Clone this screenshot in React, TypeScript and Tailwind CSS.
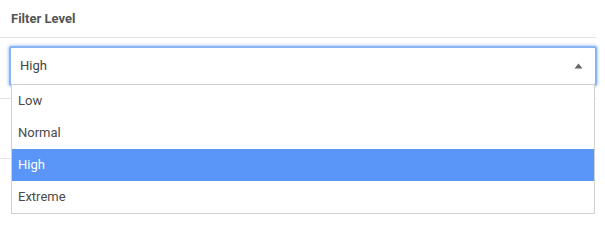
import { useState } from 'react';

const levels = ['Low', 'Normal', 'High', 'Extreme'];

export default function App() {
  const [selected] = useState('High');

  return (
    <div className="relative w-[605px] h-[221px] overflow-hidden bg-white font-['Roboto',sans-serif] text-[13px] text-[#444]">
      {/* header */}
      <div className="w-[596px] h-[38px] flex items-center px-[11px] border-b border-[#e3e3e3]">
        <span className="font-bold text-[#555]">Filter Level</span>
      </div>

      {/* field row */}
      <div className="w-[596px] h-[61px] border-b border-[#e3e3e3] pt-[8px] pl-[9px]">
        <div className="relative w-[588px] h-[40px] rounded-[3px] border-2 border-[#88b4f1] shadow-[0_0_3px_1px_#b3cff6] bg-white flex items-center justify-between pl-[9px] pr-[12px]">
          <span>{selected}</span>
          <svg width="9" height="6" viewBox="0 0 9 6" className="text-[#666]">
            <path d="M4.5 0.5 L8.5 5.5 L0.5 5.5 Z" fill="currentColor" />
          </svg>
        </div>
      </div>
      <div className="w-[596px] h-[60px] border-b border-[#e3e3e3]" />

      {/* open dropdown list */}
      <ul className="absolute left-[11px] top-[84px] w-[584px] border border-[#d0d0d0] bg-white">
        {levels.map((level) => (
          <li
            key={level}
            className={`h-[32px] flex items-center pl-[6px] ${
              level === selected ? 'bg-[#5a95f8] text-white' : 'text-[#4a4a4a]'
            }`}
          >
            {level}
          </li>
        ))}
      </ul>
    </div>
  );
}
